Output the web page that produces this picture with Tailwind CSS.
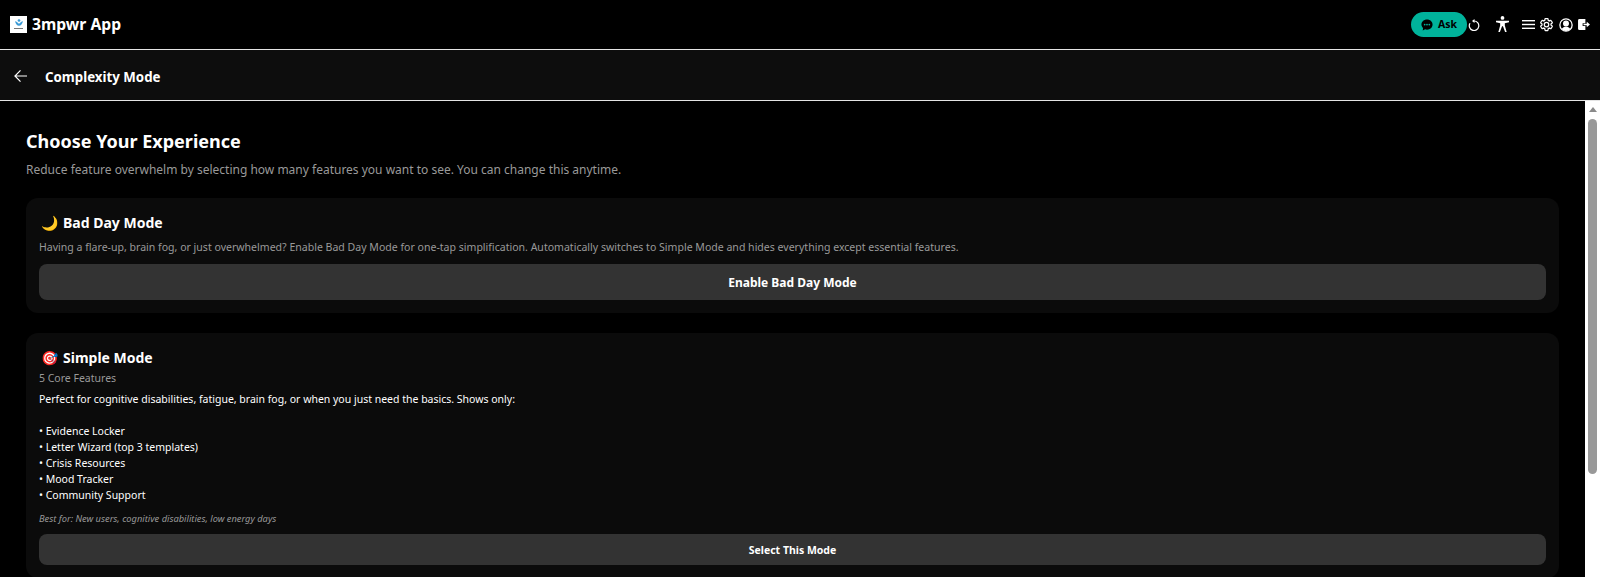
<!DOCTYPE html>
<html lang="en">
<head>
    <meta charset="UTF-8">
    <meta name="viewport" content="width=device-width, initial-scale=1.0">
    <title>3mpwr App - Complexity Mode</title>
    <script src="https://cdn.jsdelivr.net/npm/@tailwindcss/browser@4"></script>
</head>
<body class="bg-black text-white h-screen overflow-hidden flex flex-col font-['Noto_Sans','Open_Sans',sans-serif]">
    <!-- top bar -->
    <header class="h-[50px] shrink-0 bg-black border-b border-[#e5e5e5] flex items-center pl-[10px] pr-[10px]">
        <div class="w-[17px] h-[17px] -mt-[1px] bg-white flex flex-col items-center justify-center">
            <svg class="w-[8px] h-[7px]" viewBox="0 0 12 10" fill="#3b9bd6"><circle cx="6" cy="2" r="2"/><path d="M0 3c2 0 4 2 6 4 2-2 4-4 6-4-1 4-3 7-6 7S1 7 0 3z"/></svg>
            <div class="w-[9px] h-px bg-[#777] mt-[2px]"></div>
        </div>
        <span class="ml-[5px] text-[15.7px] leading-none font-bold">3mpwr App</span>
        <div class="ml-auto flex items-center">
            <button class="w-[56px] h-[25px] rounded-full bg-[#00b39b] text-black text-[10.5px] font-bold flex items-center justify-center gap-[5px]">
                <svg class="w-[12px] h-[12px]" viewBox="0 0 14 14"><path d="M7 .5c3.700 0 6.500 2.600 6.500 6s-2.800 6-6.500 6c-.8 0-1.500-.1-2.200-.4L2 13.500l.4-3C1.200 9.400.5 8 .5 6.500c0-3.400 2.800-6 6.500-6z" fill="#000"/><circle cx="4.300" cy="6.500" r="1" fill="#00b39b"/><circle cx="7" cy="6.500" r="1" fill="#00b39b"/><circle cx="9.700" cy="6.500" r="1" fill="#00b39b"/></svg>
                Ask
            </button>
            <svg class="w-[12px] h-[12px] ml-[1px] mt-[1px]" viewBox="0 0 24 24" fill="none" stroke="#fff" stroke-width="2.400"><path d="M12 4a9.500 9.500 0 1 1-8 4.500"/><path d="M13 0v8L8 4z" fill="#fff" stroke="none"/></svg>
            <svg class="w-[13px] h-[16px] ml-[16px] -mt-[1px]" viewBox="0 0 14 17" fill="#fff"><circle cx="7" cy="2" r="2"/><path d="M0 5h14v1.600L9.500 7.600V10l2 7H9.800l-2.300-6h-1l-2.300 6H2.500l2-7V7.600L0 6.600z"/></svg>
            <svg class="w-[13px] h-[9px] ml-[13px]" viewBox="0 0 13 9" fill="#fff"><rect width="13" height="1.400"/><rect y="3.800" width="13" height="1.400"/><rect y="7.600" width="13" height="1.400"/></svg>
            <svg class="w-[15px] h-[15px] ml-[4px]" viewBox="0 0 24 24" fill="none" stroke="#fff" stroke-width="2"><path d="M19.140 12.940c.04-.3.06-.61.06-.94 0-.32-.02-.64-.07-.94l2.030-1.580c.18-.14.23-.41.12-.61l-1.920-3.320c-.12-.22-.37-.29-.59-.22l-2.390.96c-.5-.38-1.030-.7-1.620-.94l-.36-2.540c-.04-.24-.24-.41-.48-.41h-3.840c-.24 0-.43.17-.47.41l-.36 2.540c-.59.24-1.130.57-1.620.94l-2.390-.96c-.22-.08-.47 0-.59.22L2.740 8.870c-.12.21-.08.47.12.61l2.030 1.580c-.05.3-.09.63-.09.94s.02.64.07.94l-2.030 1.580c-.18.14-.23.41-.12.61l1.920 3.320c.12.22.37.29.59.22l2.390-.96c.5.38 1.030.7 1.620.94l.36 2.540c.05.24.24.41.48.41h3.840c.24 0 .44-.17.47-.41l.36-2.540c.59-.24 1.130-.56 1.620-.94l2.390.96c.22.08.47 0 .59-.22l1.920-3.320c.12-.22.07-.47-.12-.61l-2.010-1.580zM12 15.600c-1.980 0-3.600-1.620-3.600-3.600s1.620-3.600 3.600-3.600 3.600 1.620 3.600 3.600-1.620 3.600-3.600 3.600z"/></svg>
            <svg class="w-[14px] h-[14px] ml-[5px]" viewBox="0 0 24 24" fill="none" stroke="#fff" stroke-width="2.200"><circle cx="12" cy="12" r="10.500"/><circle cx="12" cy="9.500" r="4" fill="#fff"/><path d="M4.500 19c2-3 4.500-4 7.500-4s5.500 1 7.500 4c-2 2-4.500 3.200-7.500 3.200S6.500 21 4.500 19z" fill="#fff" stroke="none"/></svg>
            <svg class="w-[12px] h-[11px] ml-[5px]" viewBox="0 0 13 12" fill="#fff"><path d="M1.500 0H8v4.500H5v3h3V12H1.500A1.500 1.500 0 0 1 0 10.500v-9A1.500 1.500 0 0 1 1.500 0z"/><path d="M6 5.200h3.500V3L13 6l-3.500 3V6.800H6z"/></svg>
        </div>
    </header>

    <!-- page title -->
    <div class="h-[51px] shrink-0 bg-[#0d0d0d] border-b border-[#e5e5e5] flex items-center pl-[14px]">
        <svg class="w-[13px] h-[14px] mt-[1px]" viewBox="0 0 14 14" fill="none" stroke="#fff" stroke-width="1.300"><path d="M14 7H1M7 1 1 7l6 6"/></svg>
        <h1 class="ml-[18px] pt-[6px] text-[13.3px] font-bold">Complexity Mode</h1>
    </div>

    <div class="flex-1 min-h-0 flex">
        <main class="flex-1 min-w-0 overflow-hidden bg-black px-[26px] pt-[25px]">
            <h2 class="text-[18px] leading-[30px] font-bold">Choose Your Experience</h2>
            <p class="mt-[4px] text-[12px] leading-[20px] text-[#999]">Reduce feature overwhelm by selecting how many features you want to see. You can change this anytime.</p>

            <section class="mt-[18px] bg-[#0b0b0b] rounded-xl px-[13px] pt-[14px] h-[115px]">
                <h3 class="text-[14px] leading-[22px] font-bold flex items-center"><span class="w-[24px] pl-[2px] text-[14px]">🌙</span>Bad Day Mode</h3>
                <p class="mt-[5px] text-[10.55px] leading-[16px] text-[#999]">Having a flare-up, brain fog, or just overwhelmed? Enable Bad Day Mode for one-tap simplification. Automatically switches to Simple Mode and hides everything except essential features.</p>
                <button class="mt-[9px] w-full h-[36px] pt-[2px] rounded-lg bg-[#333] text-[12px] font-bold">Enable Bad Day Mode</button>
            </section>

            <section class="mt-[20px] bg-[#0b0b0b] rounded-xl px-[13px] pt-[14px] pb-[13px]">
                <h3 class="text-[14px] leading-[22px] font-bold flex items-center"><span class="w-[24px] pl-[2px] text-[14px]">🎯</span>Simple Mode</h3>
                <p class="text-[10.5px] leading-[16px] text-[#999] mt-[1px]">5 Core Features</p>
                <p class="mt-[5px] text-[10.5px] leading-[16px] whitespace-pre-line">Perfect for cognitive disabilities, fatigue, brain fog, or when you just need the basics. Shows only:

• Evidence Locker
• Letter Wizard (top 3 templates)
• Crisis Resources
• Mood Tracker
• Community Support</p>
                <p class="mt-[9px] text-[9.3px] leading-[14px] italic text-[#999]">Best for: New users, cognitive disabilities, low energy days</p>
                <button class="mt-[8px] w-full h-[31px] pt-[2px] rounded-lg bg-[#333] text-[10.5px] font-bold">Select This Mode</button>
            </section>
        </main>

        <!-- scrollbar -->
        <div class="w-[15px] shrink-0 bg-white flex flex-col items-center pt-[6px]">
            <div class="w-0 h-0 border-x-[4.5px] border-x-transparent border-b-[5px] border-b-[#8a8a8a]"></div>
            <div class="mt-[7px] w-[9px] h-[355px] rounded-full bg-[#999]"></div>
        </div>
    </div>
</body>
</html>
